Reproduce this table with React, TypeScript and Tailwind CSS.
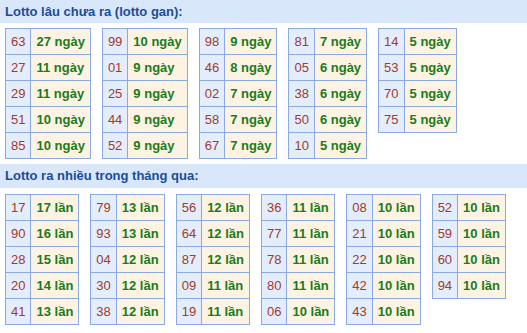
const ganTables: [string, string][][] = [
  [['63', '27 ngày'], ['27', '11 ngày'], ['29', '11 ngày'], ['51', '10 ngày'], ['85', '10 ngày']],
  [['99', '10 ngày'], ['01', '9 ngày'], ['25', '9 ngày'], ['44', '9 ngày'], ['52', '9 ngày']],
  [['98', '9 ngày'], ['46', '8 ngày'], ['02', '7 ngày'], ['58', '7 ngày'], ['67', '7 ngày']],
  [['81', '7 ngày'], ['05', '6 ngày'], ['38', '6 ngày'], ['50', '6 ngày'], ['10', '5 ngày']],
  [['14', '5 ngày'], ['53', '5 ngày'], ['70', '5 ngày'], ['75', '5 ngày']],
];

const hotTables: [string, string][][] = [
  [['17', '17 lần'], ['90', '16 lần'], ['28', '15 lần'], ['20', '14 lần'], ['41', '13 lần']],
  [['79', '13 lần'], ['93', '13 lần'], ['04', '12 lần'], ['30', '12 lần'], ['38', '12 lần']],
  [['56', '12 lần'], ['64', '12 lần'], ['87', '12 lần'], ['09', '11 lần'], ['19', '11 lần']],
  [['36', '11 lần'], ['77', '11 lần'], ['78', '11 lần'], ['80', '11 lần'], ['06', '10 lần']],
  [['08', '10 lần'], ['21', '10 lần'], ['22', '10 lần'], ['42', '10 lần'], ['43', '10 lần']],
  [['52', '10 lần'], ['59', '10 lần'], ['60', '10 lần'], ['94', '10 lần']],
];

function LottoTable({ rows }: { rows: [string, string][] }) {
  return (
    <table className="border-collapse self-start">
      <tbody>
        {rows.map(([num, val]) => (
          <tr key={num}>
            <td className="border border-[#8ca9e2] bg-[#e3edfb] px-[5px] py-[4px] leading-[17px] text-[#a23a2e]">
              {num}
            </td>
            <td className="border border-[#8ca9e2] bg-[#fdf3e3] px-[5px] py-[4px] leading-[17px] font-bold text-[#1c7a1c]">
              {val}
            </td>
          </tr>
        ))}
      </tbody>
    </table>
  );
}

function Section({ title, tables, first }: { title: string; tables: [string, string][][]; first?: boolean }) {
  return (
    <div>
      <div
        className={`flex items-center bg-[#d8e7fa] px-[5px] font-bold text-[#1b4c9c] ${
          first ? 'h-[23px]' : 'mt-[5px] h-[24px]'
        }`}
      >
        {title}
      </div>
      <div className={`flex gap-[11px] px-[5px] ${first ? 'mt-[5px]' : 'mt-[6px]'}`}>
        {tables.map((rows, i) => (
          <LottoTable key={i} rows={rows} />
        ))}
      </div>
    </div>
  );
}

export default function App() {
  return (
    <div className="h-[333px] w-[527px] overflow-hidden bg-white font-['Liberation_Sans',Arial,sans-serif] text-[13px]">
      <Section title="Lotto lâu chưa ra (lotto gan):" tables={ganTables} first />
      <Section title="Lotto ra nhiều trong tháng qua:" tables={hotTables} />
    </div>
  );
}
